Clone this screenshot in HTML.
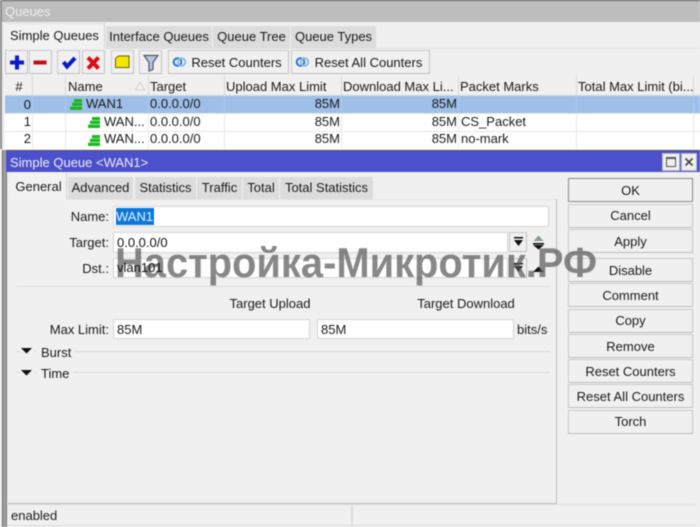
<!DOCTYPE html>
<html><head><meta charset="utf-8"><style>
html,body{margin:0;padding:0}
body{width:700px;height:527px;overflow:hidden;position:relative;background:#f0f0f0;font-family:"Liberation Sans",sans-serif;font-size:13px;color:#1a1a1a}
#r{position:absolute;left:0;top:0;width:700px;height:527px;filter:blur(.45px)}
#r div,#r svg{position:absolute;box-sizing:border-box}
.t{white-space:nowrap;line-height:16px;height:16px}
.r{text-align:right}
.c{text-align:center}
.tab{background:#dcdcdc;text-align:center;line-height:22px;white-space:nowrap}
.b{background:#f0f0f0;border:1px solid #cacaca;border-right-color:#c4c4c4;border-bottom-color:#bcbcbc;white-space:nowrap;text-align:center}
.h{background:#f0f0f0;border-right:1px solid #d8d8d8;border-bottom:1px solid #d4d4d4;height:20px;top:76px;line-height:22px;padding-left:1px;white-space:nowrap}
.cl{width:1px;background:#e8e8e8;top:114px;height:35px}
.c2{width:1px;background:#aecaec;top:96px;height:17px}
.in{background:#fff;border:1px solid #d6d6d6;line-height:20px;padding-left:3px;white-space:nowrap}
.sb{left:568px;width:125px;height:24px;line-height:23px}
</style></head><body><div id="r">
<!-- window -->
<div style="left:0;top:0;width:700px;height:22px;background:#bdbdbd;border-top:1px solid #555"></div>
<div style="left:0;top:0;width:2px;height:152px;background:#8a8a8a"></div>
<div class="t" style="left:5px;top:4px;color:#eee;font-size:13px">Queues</div>
<div style="left:2px;top:22px;width:698px;height:130px;background:#f0f0f0"></div>
<!-- tabs -->
<div style="left:5px;top:23px;width:100px;height:25px;background:#f2f2f2;border-top:1px solid #e0e0e0;border-right:1px solid #d4d4d4;text-align:center;line-height:23px">Simple Queues</div>
<div class="tab" style="left:106px;top:26px;width:106px;height:22px">Interface Queues</div>
<div class="tab" style="left:213px;top:26px;width:77px;height:22px">Queue Tree</div>
<div class="tab" style="left:291px;top:26px;width:85px;height:22px">Queue Types</div>
<div style="left:105px;top:48px;width:595px;height:1px;background:#e2e2e2"></div>
<!-- toolbar -->
<div class="b" style="left:5px;top:50px;width:23px;height:24px"></div>
<div class="b" style="left:29px;top:50px;width:23px;height:24px"></div>
<div class="b" style="left:57px;top:50px;width:23px;height:24px"></div>
<div class="b" style="left:82px;top:50px;width:23px;height:24px"></div>
<div class="b" style="left:111px;top:50px;width:23px;height:24px"></div>
<div class="b" style="left:139px;top:50px;width:23px;height:24px"></div>
<div class="b" style="left:168px;top:50px;width:121px;height:24px;line-height:24px;padding-left:16px">Reset Counters</div>
<div class="b" style="left:291px;top:50px;width:139px;height:24px;line-height:24px;padding-left:16px">Reset All Counters</div>
<svg style="left:0;top:50px" width="440" height="24" viewBox="0 50 440 24">
<path d="M17 55.500v14M10 62.500h14" stroke="#0a1cc8" stroke-width="4" fill="none"/>
<path d="M33.500 62.500h13" stroke="#cc0b16" stroke-width="4" fill="none"/>
<path d="M63.500 62l3.500 4.500 8-8.500" stroke="#0a1cc0" stroke-width="4" fill="none"/>
<path d="M88 57.500l10.500 11M98.500 57.500l-10.500 11" stroke="#e00c12" stroke-width="4" fill="none"/>
<path d="M115.500 58.500l3-2.500h10.500v11.500h-13.500z" fill="#f4e800" stroke="#6a6200" stroke-width="1"/>
<path d="M144 55.500h14l-5 7v7l-4 1.500v-8.500z" fill="#b8c6d8" stroke="#4a5a70" stroke-width="1.200"/>
<g fill="none" stroke-width="2"><circle cx="177.500" cy="62" r="3.800" stroke="#2878c8"/><circle cx="181.500" cy="62" r="3.800" stroke="#8cbce0"/>
<circle cx="300.500" cy="62" r="3.800" stroke="#2878c8"/><circle cx="304.500" cy="62" r="3.800" stroke="#8cbce0"/></g>
</svg>
<!-- table header -->
<div class="h c" style="left:5px;width:28px">#</div>
<div class="h" style="left:33px;width:33px"></div>
<div class="h" style="left:66px;width:83px;padding-left:2px">Name</div>
<div class="h" style="left:149px;width:76px">Target</div>
<div class="h" style="left:225px;width:117px">Upload Max Limit</div>
<div class="h" style="left:342px;width:117px">Download Max Li...</div>
<div class="h" style="left:459px;width:118px;padding-left:1px">Packet Marks</div>
<div class="h" style="left:577px;width:117px;padding-left:1px">Total Max Limit (bi...</div>
<div class="h" style="left:694px;width:6px;border-right:0"></div>
<svg style="left:134px;top:81px" width="12" height="10"><path d="M6 1L10.500 9H1.500z" fill="#f4f4f4" stroke="#d0d0d0"/></svg>
<!-- rows -->
<div style="left:5px;top:96px;width:695px;height:17px;background:#9dbfe8"></div>
<div style="left:5px;top:114px;width:695px;height:17px;background:#fff"></div>
<div style="left:5px;top:132px;width:695px;height:17px;background:#fff"></div>
<div style="left:5px;top:113px;width:695px;height:1px;background:#e6e6e6"></div>
<div style="left:5px;top:131px;width:695px;height:1px;background:#e6e6e6"></div>
<div class="cl" style="left:32px"></div><div class="c2" style="left:32px"></div>
<div class="cl" style="left:65px"></div><div class="c2" style="left:65px"></div>
<div class="cl" style="left:148px"></div><div class="c2" style="left:148px"></div>
<div class="cl" style="left:224px"></div><div class="c2" style="left:224px"></div>
<div class="cl" style="left:341px"></div><div class="c2" style="left:341px"></div>
<div class="cl" style="left:458px"></div><div class="c2" style="left:458px"></div>
<div class="cl" style="left:576px"></div><div class="c2" style="left:576px"></div>
<div class="cl" style="left:693px"></div><div class="c2" style="left:693px"></div>
<div class="t r" style="left:5px;top:97px;width:26px">0</div>
<div class="t r" style="left:5px;top:114px;width:26px">1</div>
<div class="t r" style="left:5px;top:131px;width:26px">2</div>
<div class="t" style="left:86px;top:96px">WAN1</div>
<div class="t" style="left:104px;top:114px">WAN...</div>
<div class="t" style="left:104px;top:131px">WAN...</div>
<div class="t" style="left:150px;top:96px">0.0.0.0/0</div>
<div class="t" style="left:150px;top:114px">0.0.0.0/0</div>
<div class="t" style="left:150px;top:131px">0.0.0.0/0</div>
<div class="t r" style="left:260px;top:96px;width:80px">85M</div>
<div class="t r" style="left:260px;top:114px;width:80px">85M</div>
<div class="t r" style="left:260px;top:131px;width:80px">85M</div>
<div class="t r" style="left:377px;top:96px;width:80px">85M</div>
<div class="t r" style="left:377px;top:114px;width:80px">85M</div>
<div class="t r" style="left:377px;top:131px;width:80px">85M</div>
<div class="t" style="left:461px;top:114px">CS_Packet</div>
<div class="t" style="left:461px;top:131px">no-mark</div>
<svg style="left:0;top:96px" width="120" height="54" viewBox="0 96 120 54">
<path fill="#1cb820" d="M74 99h8v3.200h-8zM72 102.800h10v3.200H72zM70 106.600h12v3.400H70z"/>
<path fill="#1cb820" d="M92 117h8v3.200h-8zM90 120.800h10v3.200H90zM88 124.600h12v3.400H88zM92 135h8v3.200h-8zM90 138.800h10v3.200H90zM88 142.600h12v3.400H88z"/>
</svg>
<!-- dialog frame -->
<div style="left:0;top:149px;width:6px;height:378px;background:#f0f0f0"></div>
<div style="left:2px;top:150px;width:1px;height:377px;background:#666"></div>
<div style="left:3px;top:150px;width:3px;height:377px;background:#a0a0a0"></div>
<div style="left:6px;top:150px;width:694px;height:377px;background:#f0f0f0;border-left:1px solid #777"></div>
<div style="left:6px;top:150px;width:694px;height:22px;background:#4c50cc;border-top:1px solid #555"></div>
<div class="t" style="left:10px;top:155px;color:#eee">Simple Queue &lt;WAN1&gt;</div>
<div style="left:662px;top:153px;width:18px;height:18px;background:#f0f0f0;border:1px solid #bbb"></div>
<div style="left:666px;top:157px;width:10px;height:10px;border:1px solid #555;border-top-width:2px"></div>
<div style="left:681px;top:153px;width:16px;height:18px;background:#f0f0f0;border:1px solid #bbb"></div>
<svg style="left:681px;top:153px" width="16" height="18"><path d="M4.500 5.500l7 7M11.500 5.500l-7 7" stroke="#444" stroke-width="1.600"/></svg>
<!-- dialog tabs -->
<div style="left:11px;top:173px;width:56px;height:27px;background:#f2f2f2;border-right:1px solid #d4d4d4;text-align:center;line-height:27px">General</div>
<div class="tab" style="left:68px;top:177px;width:65px;height:22px">Advanced</div>
<div class="tab" style="left:135px;top:177px;width:61px;height:22px">Statistics</div>
<div class="tab" style="left:197px;top:177px;width:45px;height:22px">Traffic</div>
<div class="tab" style="left:243px;top:177px;width:36px;height:22px">Total</div>
<div class="tab" style="left:280px;top:177px;width:93px;height:22px">Total Statistics</div>
<div style="left:67px;top:199px;width:490px;height:1px;background:#e4e4e4"></div>
<div style="left:556px;top:199px;width:1px;height:305px;background:#bcbcbc"></div>
<div style="left:8px;top:503px;width:549px;height:1px;background:#bcbcbc"></div>
<!-- form -->
<div class="t r" style="left:20px;top:209px;width:89px">Name:</div>
<div class="t r" style="left:20px;top:235px;width:89px">Target:</div>
<div class="t r" style="left:20px;top:261px;width:89px">Dst.:</div>
<div class="in" style="left:113px;top:206px;width:436px;height:21px"></div>
<div class="t" style="left:116px;top:208px;height:17px;line-height:17px;background:#0a78d8;color:#e8f0ff;padding:0 1px 0 0">WAN1</div>
<div class="in" style="left:113px;top:232px;width:395px;height:21px"></div>
<div class="in" style="left:113px;top:258px;width:395px;height:20px"></div>
<div class="b" style="left:509px;top:232px;width:18px;height:20px"></div>
<div class="b" style="left:509px;top:258px;width:18px;height:20px"></div>
<svg style="left:505px;top:228px" width="50" height="56" viewBox="505 228 50 56">
<path d="M514 237h9v1.500h-9zM514 240h9l-4.500 6z" fill="#111"/>
<path d="M514 263h9v1.500h-9zM514 266h9l-4.500 6z" fill="#111"/>
<path d="M533.500 241l5-5.500 5 5.500z" fill="#8a9a8e"/>
<path d="M533 243h11v1.500h-11zM533 245h11l-5.500 4.500z" fill="#111"/>
<path d="M533 272l5.500-5.500 5.500 5.500z" fill="#111"/>
</svg>
<div style="left:16px;top:286px;width:533px;height:1px;background:#dcdcdc"></div>
<div class="t c" style="left:170px;top:296px;width:200px">Target Upload</div>
<div class="t c" style="left:366px;top:296px;width:200px">Target Download</div>
<div class="t r" style="left:20px;top:322px;width:89px">Max Limit:</div>
<div class="in" style="left:113px;top:319px;width:197px;height:20px">85M</div>
<div class="in" style="left:317px;top:319px;width:197px;height:20px">85M</div>
<div class="t" style="left:517px;top:322px">bits/s</div>
<div style="left:16px;top:351px;width:534px;height:1px;background:#d8d8d8"></div>
<div style="left:16px;top:372px;width:534px;height:1px;background:#d8d8d8"></div>
<div style="left:36px;top:344px;width:39px;height:16px;background:#f0f0f0"></div>
<div style="left:36px;top:366px;width:37px;height:16px;background:#f0f0f0"></div>
<div style="left:20px;top:345px;width:14px;height:12px;background:#f0f0f0"></div>
<div style="left:20px;top:366px;width:14px;height:12px;background:#f0f0f0"></div>
<svg style="left:20px;top:345px" width="14" height="34"><path d="M1 3h11L6.500 8.500zM1 25h11l-5.500 5.500z" fill="#111"/></svg>
<div class="t" style="left:41px;top:345px">Burst</div>
<div class="t" style="left:41px;top:366px">Time</div>
<!-- side buttons -->
<div class="b sb" style="top:178px;border-color:#8a8a8a">OK</div>
<div class="b sb" style="top:204px;line-height:22px">Cancel</div>
<div class="b sb" style="top:229px">Apply</div>
<div class="b sb" style="top:258px">Disable</div>
<div class="b sb" style="top:283px">Comment</div>
<div class="b sb" style="top:309px;line-height:22px">Copy</div>
<div class="b sb" style="top:334px">Remove</div>
<div class="b sb" style="top:359px">Reset Counters</div>
<div class="b sb" style="top:384px">Reset All Counters</div>
<div class="b sb" style="top:410px;line-height:22px">Torch</div>
<!-- status -->
<div style="left:8px;top:504px;width:344px;height:22px;border:1px solid #dcdcdc;border-left:0"></div>
<div style="left:352px;top:504px;width:344px;height:22px;border:1px solid #dcdcdc;border-right:0"></div>
<div class="t" style="left:11px;top:508px">enabled</div>
<!-- watermark -->
<svg style="left:0;top:230px" width="700" height="60"><text x="115" y="47" font-family="Liberation Sans" font-weight="bold" font-size="42" textLength="482" lengthAdjust="spacingAndGlyphs" fill="#555" fill-opacity=".7">Настройка-Микротик.РФ</text></svg>
<div class="t" style="left:117px;top:235px;color:#111">0.0.0.0/0</div>
<div class="t" style="left:117px;top:260px;color:#111">vlan101</div>
</div></body></html>
